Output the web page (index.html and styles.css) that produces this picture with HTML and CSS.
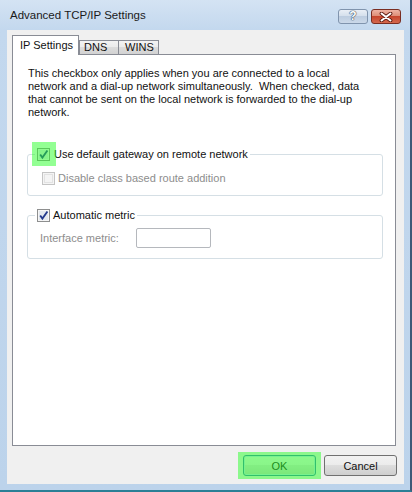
FILE: index.html
```html
<!DOCTYPE html>
<html>
<head>
<meta charset="utf-8">
<link rel="stylesheet" href="styles.css">
</head>
<body>
<div class="window">
  <div class="titlebar">
    <span class="title">Advanced TCP/IP Settings</span>
    <div class="caption">
      <div class="cbtn help">?</div>
      <div class="cbtn close">
        <svg width="14" height="10" viewBox="0 0 14 10"><path d="M2.5 1.5 L11.5 8.5 M11.5 1.5 L2.5 8.5" stroke="#5e1c12" stroke-width="3.8" stroke-linecap="round" fill="none"/><path d="M2.5 1.5 L11.5 8.5 M11.5 1.5 L2.5 8.5" stroke="#fff" stroke-width="2" stroke-linecap="round" fill="none"/></svg>
      </div>
    </div>
  </div>
  <div class="client">
    <div class="tabs">
      <div class="tab active">IP Settings</div>
      <div class="tab dns">DNS</div>
      <div class="tab wins">WINS</div>
    </div>
    <div class="panel">
      <p class="info">This checkbox only applies when you are connected to a local<br>network and a dial-up network simultaneously.&nbsp; When checked, data<br>that cannot be sent on the local network is forwarded to the dial-up<br>network.</p>
      <fieldset class="group g1">
        <legend>
          <span class="cbwrap hl"><svg class="cb" width="13" height="13" viewBox="0 0 13 13"><rect x=".5" y=".5" width="12" height="12" fill="#f6f6f6" stroke="#8e8f8f"/><rect x="2" y="2" width="9" height="9" fill="#e3e8ee"/><path d="M3.2 6.4 L5.4 9.6 L10.4 2.4" fill="none" stroke="#23398c" stroke-width="1.8"/></svg></span>
          <span>Use default gateway on remote network</span>
        </legend>
        <div class="row disabled">
          <span class="cbwrap"><svg class="cb" width="13" height="13" viewBox="0 0 13 13"><rect x=".5" y=".5" width="12" height="12" fill="#f4f4f4" stroke="#c4c4c4"/><rect x="2.5" y="2.5" width="8" height="8" fill="#f4f4f4" stroke="#e2e2e2"/></svg></span>
          <span>Disable class based route addition</span>
        </div>
      </fieldset>
      <fieldset class="group g2">
        <legend>
          <span class="cbwrap"><svg class="cb" width="13" height="13" viewBox="0 0 13 13"><rect x=".5" y=".5" width="12" height="12" fill="#f6f6f6" stroke="#8e8f8f"/><rect x="2" y="2" width="9" height="9" fill="#e3e8ee"/><path d="M3.2 6.4 L5.4 9.6 L10.4 2.4" fill="none" stroke="#23398c" stroke-width="1.8"/></svg></span>
          <span>Automatic metric</span>
        </legend>
        <div class="row metric">
          <span class="lbl">Interface metric:</span>
          <span class="input"></span>
        </div>
      </fieldset>
    </div>
    <div class="buttons">
      <div class="btn ok">OK</div>
      <div class="btn">Cancel</div>
    </div>
  </div>
</div>
</body>
</html>
```
FILE: styles.css
```css
html, body {
  margin: 0;
  padding: 0;
}
body {
  width: 412px;
  height: 492px;
  overflow: hidden;
  font-family: "Liberation Sans", Arial, sans-serif;
  font-size: 11px;
  color: #111;
  background: #bcd3eb;
}
.window {
  box-sizing: border-box;
  width: 412px;
  height: 492px;
  display: flex;
  flex-direction: column;
  background: linear-gradient(to bottom, #d4e3f3 0px, #c3d8ee 30px, #bcd3eb 100%);
  border-right: 2px solid #3e5a78;
  border-bottom: 2px solid #2b7f96;
}
.titlebar {
  height: 30px;
  flex-shrink: 0;
  display: flex;
  align-items: flex-start;
}
.title {
  flex: 1;
  margin-left: 10px;
  line-height: 30px;
  font-size: 11.5px;
  color: #1a1a1a;
}
.caption {
  display: flex;
  gap: 3px;
  margin-top: 9px;
  margin-right: 9px;
}
.cbtn {
  box-sizing: border-box;
  width: 30px;
  height: 15px;
  border-radius: 3px;
  display: flex;
  align-items: center;
  justify-content: center;
}
.help {
  border: 1px solid #8094ad;
  background: linear-gradient(#e9eff6 0%, #d3deeb 50%, #bdcde0 50%, #cbd9e9 100%);
  color: #fff;
  font-weight: bold;
  font-size: 12px;
  line-height: 13px;
  text-shadow: 0 0 1px #34465f, 0 0 1px #34465f, 0 0 1px #34465f;
}
.close {
  border: 1px solid #7a2d21;
  background: linear-gradient(#eeb3a3 0%, #dc8a73 50%, #c6462d 50%, #d4684e 100%);
}
.client {
  flex: 1;
  box-sizing: border-box;
  margin: 0 6px 6px 7px;
  background: #f0f0f0;
  display: flex;
  flex-direction: column;
  padding: 5px 8px 8px 5px;
}
.tabs {
  height: 19px;
  flex-shrink: 0;
  display: flex;
  align-items: flex-end;
  position: relative;
  z-index: 1;
}
.tab {
  box-sizing: border-box;
  border: 1px solid #898c95;
  border-bottom: none;
  background: linear-gradient(#f3f3f3 0%, #ebebeb 50%, #dcdcdc 50%, #d2d2d2 100%);
  height: 14px;
  line-height: 13px;
  color: #111;
}
.tab.active {
  width: 67px;
  height: 20px;
  margin-bottom: -1px;
  background: #fff;
  padding-left: 7px;
  line-height: 19px;
}
.tab.dns {
  width: 40px;
  padding-left: 4px;
}
.tab.wins {
  width: 41px;
  margin-left: -1px;
  padding-left: 6px;
}
.panel {
  flex: 1;
  background: #fff;
  border: 1px solid #898c95;
  padding: 12px 12px 0 14px;
}
.info {
  margin: 0;
  padding-left: 1px;
  line-height: 13px;
  color: #111;
}
.group {
  margin: 0;
  border: 1px solid #d5dfe5;
  border-radius: 3px;
  padding: 0 10px 9px 7px;
}
.g1 {
  margin-top: 28px;
}
.g2 {
  margin-top: 12px;
  padding-bottom: 10px;
}
legend {
  padding: 0 2px;
  display: flex;
  align-items: center;
  gap: 4px;
  line-height: 15px;
}
.g2 legend {
  gap: 3px;
}
.cbwrap {
  display: inline-flex;
  width: 13px;
  height: 13px;
  position: relative;
}
.cb {
  display: block;
}
.hl::after {
  content: "";
  position: absolute;
  top: -6px;
  left: -5px;
  right: -6px;
  bottom: -5px;
  background: rgba(40, 255, 40, 0.5);
}
.row {
  display: flex;
  align-items: center;
  gap: 3px;
  line-height: 15px;
}
.row.disabled {
  margin-top: 9px;
  padding-left: 7px;
  color: #8d8d8d;
}
.row.metric {
  margin-top: 5px;
  padding-left: 5px;
  gap: 0;
  color: #8d8d8d;
}
.lbl {
  width: 96px;
}
.input {
  box-sizing: border-box;
  width: 75px;
  height: 20px;
  border: 1px solid #b5b8bd;
  border-radius: 2px;
  background: #fff;
}
.buttons {
  flex-shrink: 0;
  display: flex;
  justify-content: flex-end;
  gap: 8px;
  margin-top: 9px;
  margin-right: -1px;
}
.btn {
  box-sizing: border-box;
  width: 73px;
  height: 21px;
  border: 1px solid #707070;
  border-radius: 3px;
  background: linear-gradient(#f2f2f2 0%, #ebebeb 50%, #dddddd 50%, #cfcfcf 100%);
  display: flex;
  align-items: center;
  justify-content: center;
  color: #111;
}
.btn.ok {
  position: relative;
  border-color: #3c7fb1;
  box-shadow: inset 0 0 0 1px #c4e5f6;
}
.btn.ok::after {
  content: "";
  position: absolute;
  top: -4px;
  bottom: -4px;
  left: -6px;
  right: -6px;
  background: rgba(40, 255, 40, 0.5);
}
```
